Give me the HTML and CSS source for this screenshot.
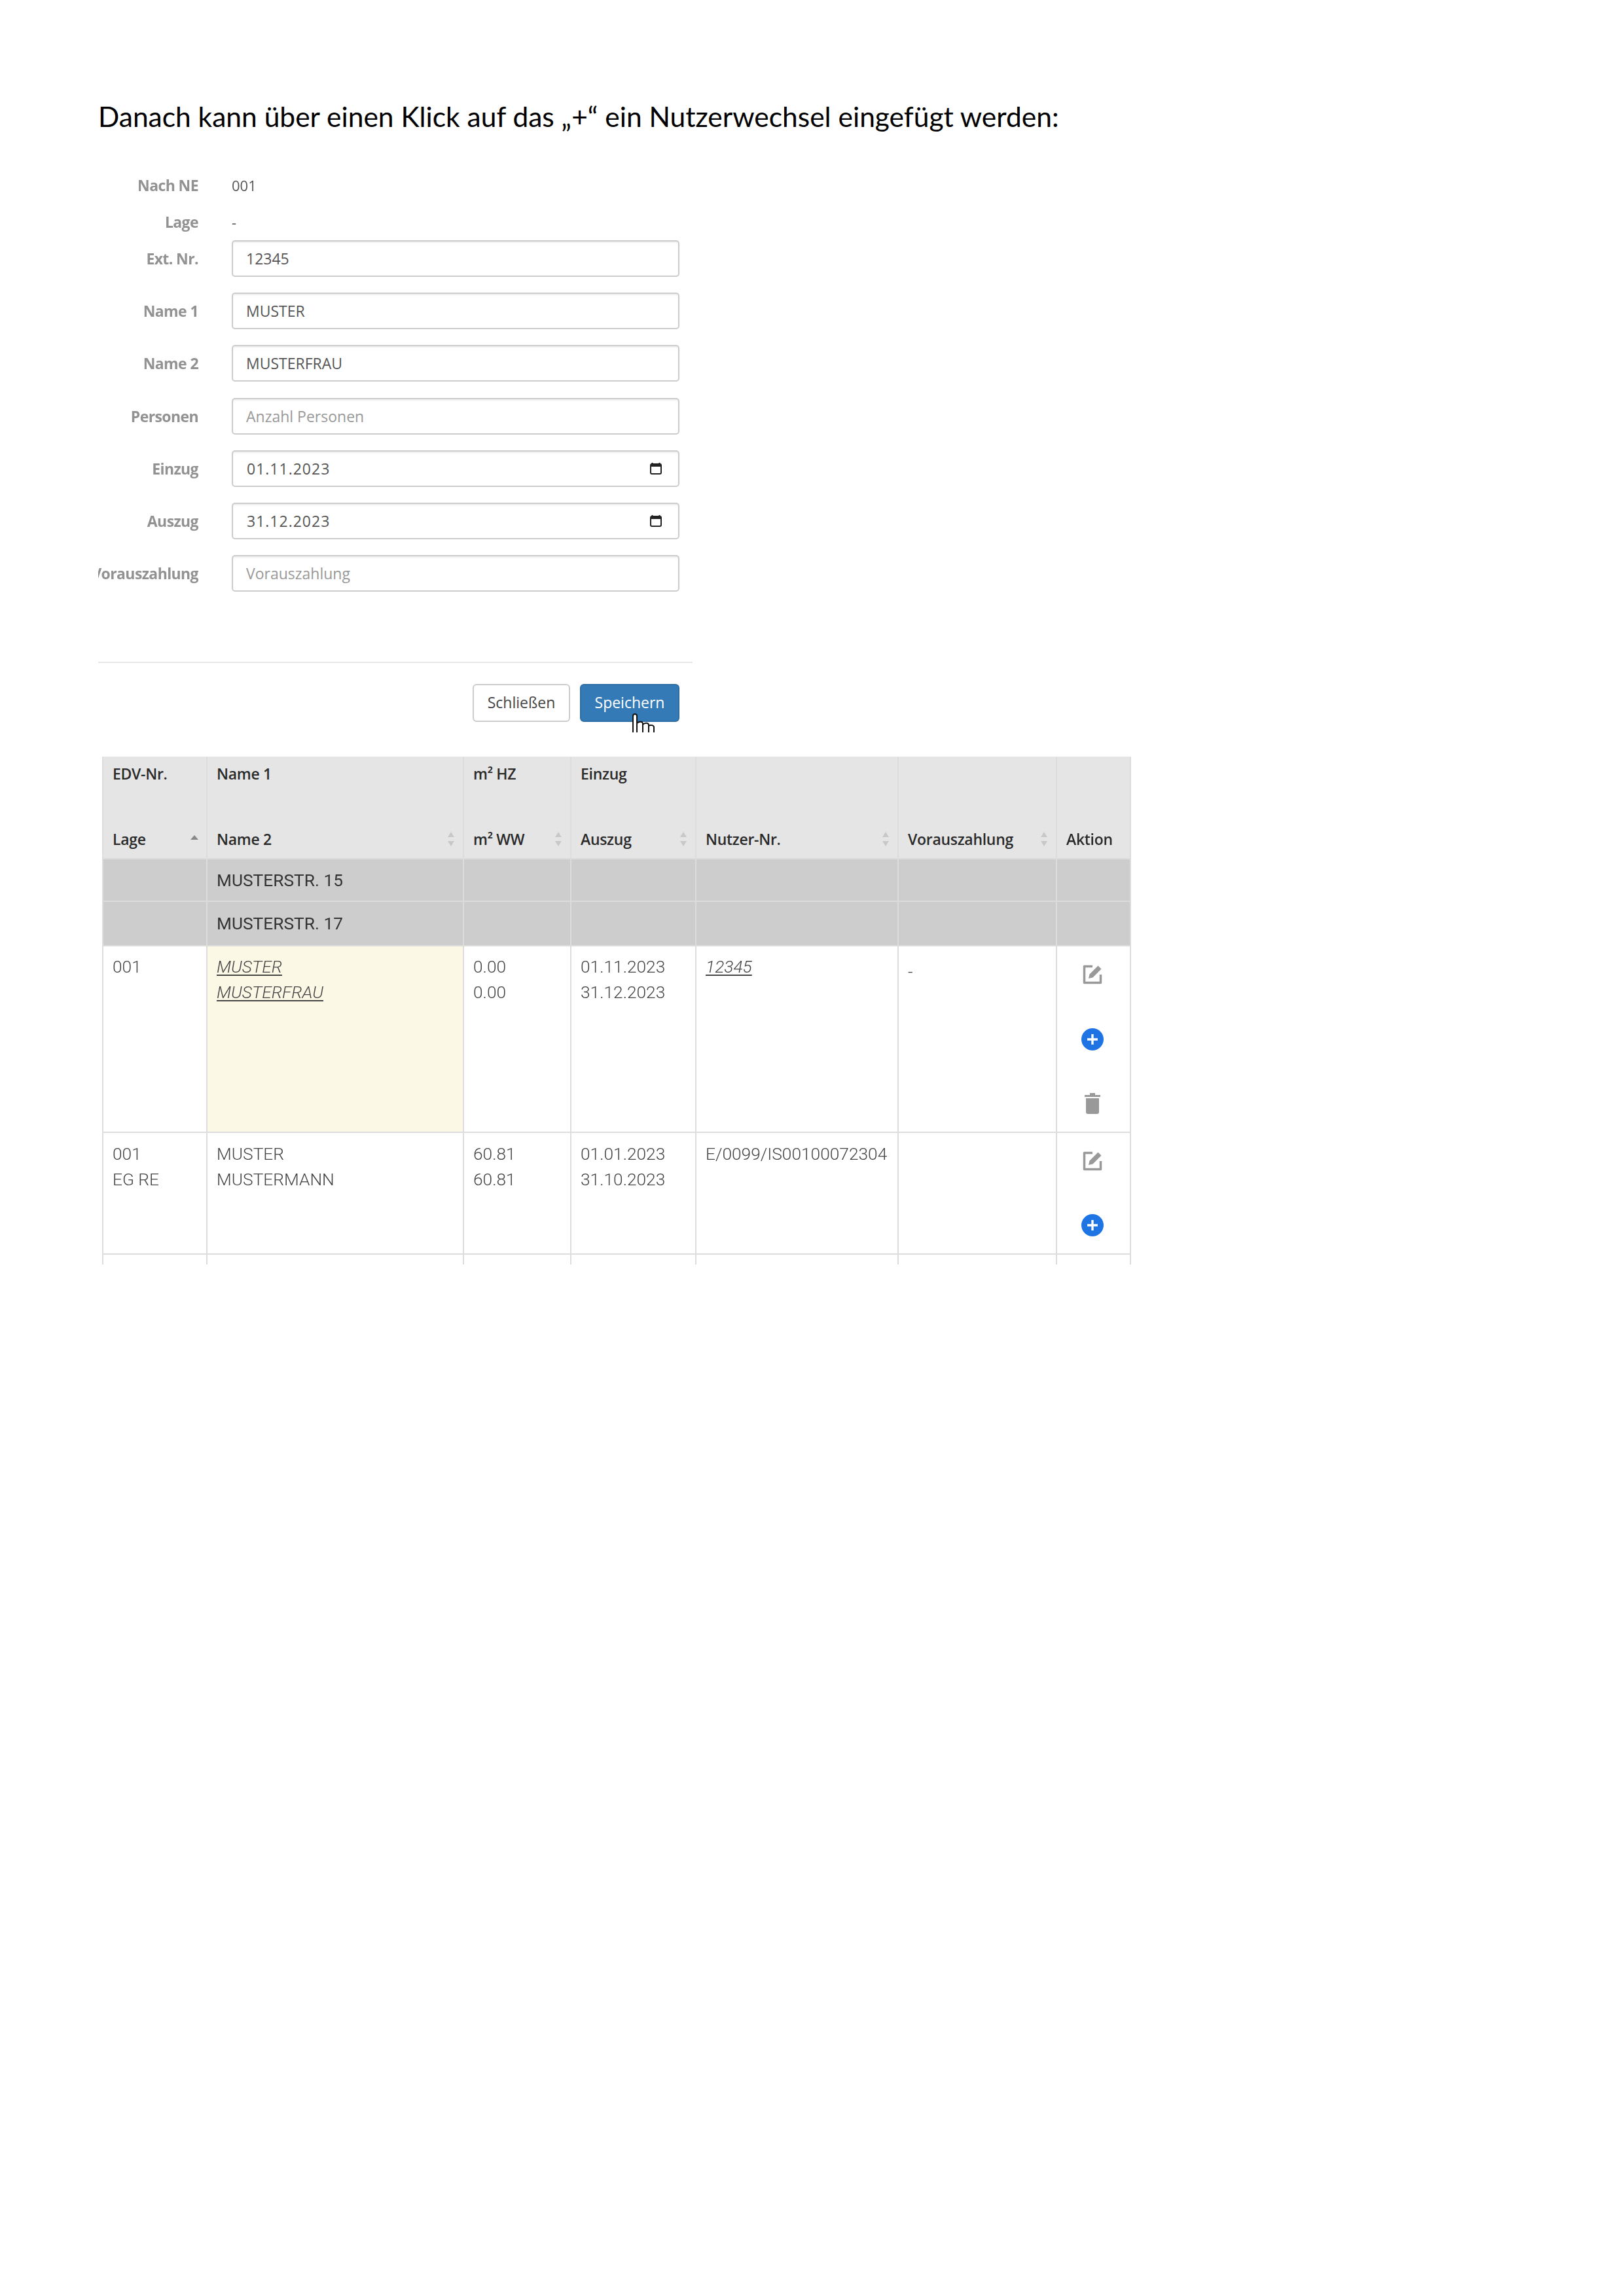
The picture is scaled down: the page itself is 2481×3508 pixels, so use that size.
FILE: index.html
```html
<!DOCTYPE html>
<html lang="de">
<head>
<meta charset="utf-8">
<title>Nutzerwechsel</title>
<link rel="stylesheet" href="styles.css">
</head>
<body>
<main class="page">
  <h1 class="heading">Danach kann über einen Klick auf das „+“ ein Nutzerwechsel eingefügt werden:</h1>

  <section class="form">
    <div class="form-fields">
      <div class="row"><div class="label"><span>Nach NE</span></div><div class="static">001</div></div>
      <div class="row row-tight"><div class="label"><span>Lage</span></div><div class="static">-</div></div>
      <div class="row"><div class="label"><span>Ext. Nr.</span></div><div class="field">12345</div></div>
      <div class="row"><div class="label"><span>Name 1</span></div><div class="field">MUSTER</div></div>
      <div class="row"><div class="label"><span>Name 2</span></div><div class="field">MUSTERFRAU</div></div>
      <div class="row"><div class="label"><span>Personen</span></div><div class="field placeholder">Anzahl Personen</div></div>
      <div class="row"><div class="label"><span>Einzug</span></div><div class="field date"><span>01.11.2023</span>
        <svg class="cal" viewBox="0 0 20 20"><path d="M4.5 1v3M15.500 1v3" stroke="#222" stroke-width="2" fill="none"/><rect x="2" y="3" width="16" height="15" rx="2" fill="none" stroke="#222" stroke-width="2"/><rect x="2" y="3" width="16" height="4" fill="#222"/></svg></div></div>
      <div class="row"><div class="label"><span>Auszug</span></div><div class="field date"><span>31.12.2023</span>
        <svg class="cal" viewBox="0 0 20 20"><path d="M4.5 1v3M15.500 1v3" stroke="#222" stroke-width="2" fill="none"/><rect x="2" y="3" width="16" height="15" rx="2" fill="none" stroke="#222" stroke-width="2"/><rect x="2" y="3" width="16" height="4" fill="#222"/></svg></div></div>
      <div class="row"><div class="label"><span>Vorauszahlung</span></div><div class="field placeholder">Vorauszahlung</div></div>
    </div>
    <div class="footer">
      <div class="btn btn-default">Schließen</div>
      <div class="btn btn-primary">Speichern
        <svg class="hand" viewBox="0 0 36 30"><path d="M2 30V5a3 3 0 0 1 6 0V30M8 16c4-3 8-3 9 0V30M17 18c3-3 8-3 9 0V30M26 20c3-2 8-1 8 2V30" fill="#fff" stroke="#111" stroke-width="2"/></svg>
      </div>
    </div>
  </section>

  <table class="grid">
    <colgroup>
      <col class="c1"><col class="c2"><col class="c3"><col class="c4"><col class="c5"><col class="c6"><col class="c7">
    </colgroup>
    <thead>
      <tr>
        <th><div class="th-top">EDV-Nr.</div><div class="th-bot"><span>Lage</span><svg class="sort" viewBox="0 0 12 26"><path d="M6 7l6 7H0z" fill="#888"/></svg></div></th>
        <th><div class="th-top">Name 1</div><div class="th-bot"><span>Name 2</span><svg class="sort" viewBox="0 0 12 26"><path d="M6 2l5 8H1z" fill="#c8c8c8"/><path d="M6 24l5-8H1z" fill="#c8c8c8"/></svg></div></th>
        <th><div class="th-top">m² HZ</div><div class="th-bot"><span>m² WW</span><svg class="sort" viewBox="0 0 12 26"><path d="M6 2l5 8H1z" fill="#c8c8c8"/><path d="M6 24l5-8H1z" fill="#c8c8c8"/></svg></div></th>
        <th><div class="th-top">Einzug</div><div class="th-bot"><span>Auszug</span><svg class="sort" viewBox="0 0 12 26"><path d="M6 2l5 8H1z" fill="#c8c8c8"/><path d="M6 24l5-8H1z" fill="#c8c8c8"/></svg></div></th>
        <th><div class="th-top">&nbsp;</div><div class="th-bot"><span>Nutzer-Nr.</span><svg class="sort" viewBox="0 0 12 26"><path d="M6 2l5 8H1z" fill="#c8c8c8"/><path d="M6 24l5-8H1z" fill="#c8c8c8"/></svg></div></th>
        <th><div class="th-top">&nbsp;</div><div class="th-bot"><span>Vorauszahlung</span><svg class="sort" viewBox="0 0 12 26"><path d="M6 2l5 8H1z" fill="#c8c8c8"/><path d="M6 24l5-8H1z" fill="#c8c8c8"/></svg></div></th>
        <th><div class="th-top">&nbsp;</div><div class="th-bot"><span>Aktion</span></div></th>
      </tr>
    </thead>
    <tbody>
      <tr class="group g1"><td></td><td>MUSTERSTR. 15</td><td></td><td></td><td></td><td></td><td></td></tr>
      <tr class="group g2"><td></td><td>MUSTERSTR. 17</td><td></td><td></td><td></td><td></td><td></td></tr>
      <tr class="data d1">
        <td>001</td>
        <td class="highlight"><a class="link">MUSTER</a><br><a class="link">MUSTERFRAU</a></td>
        <td>0.00<br>0.00</td>
        <td>01.11.2023<br>31.12.2023</td>
        <td><a class="link">12345</a></td>
        <td class="dash">-</td>
        <td class="actions"><div class="icon-stack">
          <svg class="ic-edit" viewBox="0 0 30 30"><path d="M15 2.500H2.500v25h25V15" fill="none" stroke="#999" stroke-width="3.500" stroke-linejoin="round"/><path d="M9 21l1.500-6.500L23.500 1.500l5 5L15.500 19.500z" fill="#999"/></svg>
          <svg class="ic-plus" viewBox="0 0 34 34"><circle cx="17" cy="17" r="17" fill="#1f74e4"/><path d="M17 9v16M9 17h16" stroke="#fff" stroke-width="3.400"/></svg>
          <svg class="ic-trash" viewBox="0 0 24 32"><path d="M0 3h8V0h8v3h8v3H0z" fill="#999"/><path d="M2 8h20v21a3 3 0 0 1-3 3H5a3 3 0 0 1-3-3z" fill="#999"/></svg>
        </div></td>
      </tr>
      <tr class="data d2">
        <td>001<br>EG RE</td>
        <td>MUSTER<br>MUSTERMANN</td>
        <td>60.81<br>60.81</td>
        <td>01.01.2023<br>31.10.2023</td>
        <td>E/0099/IS00100072304</td>
        <td></td>
        <td class="actions"><div class="icon-stack stack-2">
          <svg class="ic-edit" viewBox="0 0 30 30"><path d="M15 2.500H2.500v25h25V15" fill="none" stroke="#999" stroke-width="3.500" stroke-linejoin="round"/><path d="M9 21l1.500-6.500L23.500 1.500l5 5L15.500 19.500z" fill="#999"/></svg>
          <svg class="ic-plus" viewBox="0 0 34 34"><circle cx="17" cy="17" r="17" fill="#1f74e4"/><path d="M17 9v16M9 17h16" stroke="#fff" stroke-width="3.400"/></svg>
        </div></td>
      </tr>
      <tr class="stub"><td></td><td></td><td></td><td></td><td></td><td></td><td></td></tr>
    </tbody>
  </table>
</main>
</body>
</html>
```
FILE: styles.css
```css
* { box-sizing: border-box; }
html, body { margin: 0; background: #fff; }
body { width: 2481px; height: 3508px; overflow: hidden; }

.page { padding: 150px 0 0 150px; }

.heading {
  margin: 0;
  height: 56px;
  line-height: 56px;
  font-family: "Lato", "Open Sans", sans-serif;
  font-weight: 400;
  font-size: 42.5px;
  color: #000;
  white-space: nowrap;
}

.form {
  width: 908px;
  margin-top: 49px;
  font-family: "Open Sans", sans-serif;
  font-size: 23px;
  color: #555;
  filter: blur(0.6px);
}
.form-fields { display: flex; flex-direction: column; gap: 24.2px; }
.row { display: flex; height: 56px; }
.row-tight { margin-top: -24.2px; margin-bottom: -24.2px; }
.label {
  width: 153px;
  margin-right: 51px;
  flex: none;
  display: flex;
  justify-content: flex-end;
  align-items: center;
  overflow: hidden;
  white-space: nowrap;
  font-weight: 700;
  font-size: 23px;
  letter-spacing: -0.6px;
  color: #929292;
}
.label span { flex: none; }
.static { display: flex; align-items: center; color: #555; font-size: 22px; }
.field {
  width: 684px;
  display: flex;
  align-items: center;
  justify-content: space-between;
  padding: 0 20px;
  border: 2px solid #ccc;
  border-radius: 5px;
  background: #fff;
  box-shadow: inset 0 2px 2px rgba(0,0,0,.07);
}
.placeholder { color: #999; }
.date { letter-spacing: 1px; padding: 0 24px 0 21px; }
.cal { width: 20px; height: 20px; }

.footer {
  position: relative;
  margin-top: 107px;
  border-top: 2px solid #e8e8e8;
  padding: 32px 20px 0 0;
  display: flex;
  justify-content: flex-end;
  gap: 15px;
}
.btn {
  position: relative;
  height: 58px;
  padding-bottom: 2px;
  display: flex;
  align-items: center;
  justify-content: center;
  border-radius: 6px;
  font-size: 23px;
}
.btn-default { width: 149px; border: 2px solid #ccc; background: #fff; color: #444; }
.btn-primary { width: 152px; background: #337ab7; border: 2px solid #2e6da4; color: #fff; }
.hand { position: absolute; left: 77px; top: 42px; width: 36px; height: 30px; }

.grid {
  margin: 53px 0 0 6px;
  width: 1570px;
  table-layout: fixed;
  border-collapse: collapse;
  font-family: "Roboto", sans-serif;
  font-size: 26.3px;
  font-weight: 300;
  line-height: 39px;
  color: #444;
  filter: blur(0.4px);
}
.c1 { width: 159px; }
.c2 { width: 392px; }
.c3 { width: 164px; }
.c4 { width: 191px; }
.c5 { width: 309px; }
.c6 { width: 242px; }
.c7 { width: 113px; }

.grid th {
  height: 156px;
  padding: 0 14px;
  background: #e5e5e5;
  border: 2px solid #ddd;
  border-top: 0;
  border-bottom: 0;
  vertical-align: top;
  text-align: left;
  font-family: "Open Sans", sans-serif;
  font-size: 23px;
  font-weight: 600;
  letter-spacing: -0.3px;
  color: #2a2a2a;
  line-height: 32px;
}
.th-top { height: 110px; padding-top: 10px; }
.th-bot { display: flex; align-items: center; justify-content: space-between; white-space: nowrap; }
.sort { width: 12px; height: 26px; flex: none; margin-right: -2px; }

.grid td {
  padding: 12px 14px 0;
  border: 2px solid #ddd;
  vertical-align: top;
  overflow: visible;
  white-space: nowrap;
}

.group td {
  background: #cdcdcd;
  border-color: #dcdcdc;
  padding-top: 13px;
  padding-bottom: 0;
  font-weight: 400;
  color: #333;
}
.g1 td { height: 65px; }
.g2 td { height: 68px; padding-top: 14px; }
.d1 td { height: 285px; }
.d2 td { height: 186px; padding-top: 13px; }
.stub td { height: 16px; padding: 0; border-bottom: 0; }

.grid td.highlight { background: #fbf8e6; }
.link { font-style: italic; text-decoration: underline; text-underline-offset: 3px; }
.dash { padding-top: 20px !important; }
.grid td.actions { padding: 28px 4px 0 0; }
.icon-stack { display: flex; flex-direction: column; align-items: center; gap: 67px; height: 232px; }
.stack-2 { gap: 66px; height: auto; }
.ic-edit { width: 30px; height: 30px; flex: none; }
.ic-plus { width: 34px; height: 34px; flex: none; }
.ic-trash { width: 24px; height: 32px; flex: none; margin-top: -2px; }
```
